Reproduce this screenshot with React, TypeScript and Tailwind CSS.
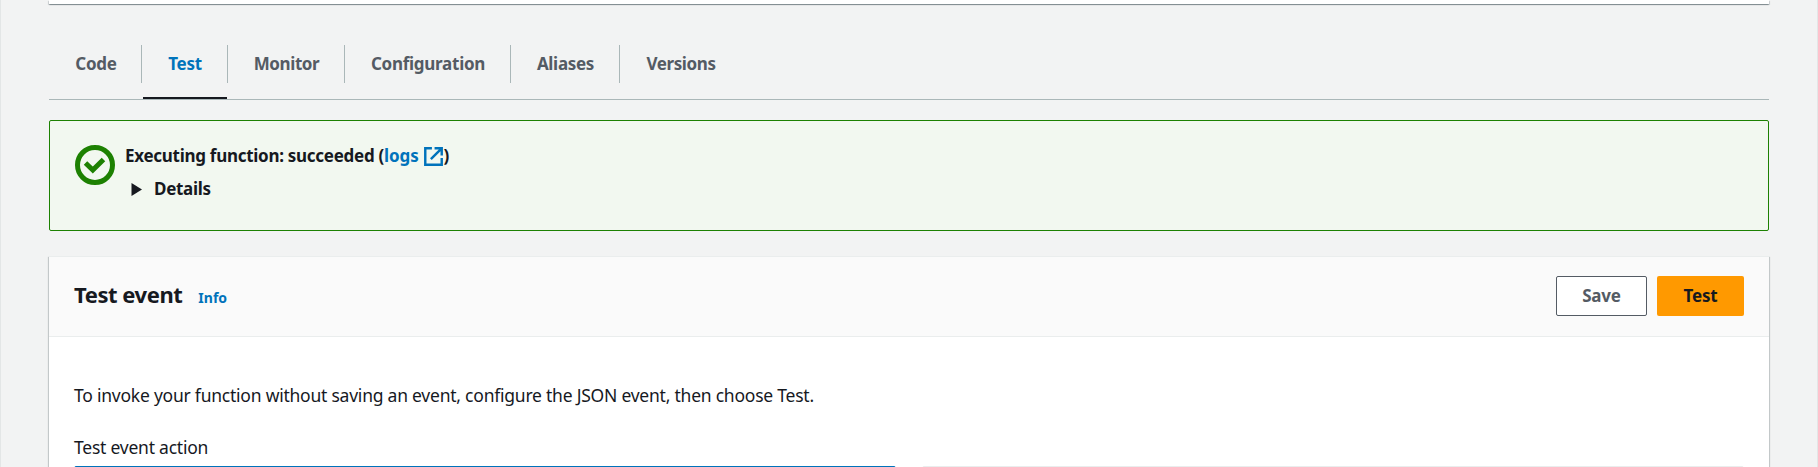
import React from "react";

const tabs = [
  { label: "Code", box: "w-[93px]", text: "ml-[2px] tracking-[-0.2px]" },
  { label: "Test", box: "w-[86px]", text: "ml-px tracking-[-0.3px]" },
  { label: "Monitor", box: "w-[117px]", text: "ml-px tracking-[-0.4px]" },
  { label: "Configuration", box: "w-[166px]", text: "ml-px tracking-[-0.26px]" },
  { label: "Aliases", box: "w-[109px]", text: "ml-px tracking-[-0.3px]" },
  { label: "Versions", box: "w-[122px]", text: "tracking-[-0.38px]" },
];

function Tabs() {
  return (
    <nav className="mt-[41px] flex h-[55px] border-b border-[#aab7b8]">
      {tabs.map((t, i) => {
        const active = t.label === "Test";
        return (
          <div key={t.label} className={`${t.box} flex flex-col justify-between`}>
            <div
              className={`flex h-[38px] items-center justify-center border-[#aab7b8] ${
                i < tabs.length - 1 ? "border-r" : ""
              }`}
            >
              <span
                className={`${t.text} text-[17px] leading-[22px] font-bold whitespace-nowrap ${
                  active ? "text-[#0073bb]" : "text-[#545b64]"
                }`}
              >
                {t.label}
              </span>
            </div>
            {active && <div className="mr-px ml-px h-[2px] bg-[#16191f]" />}
          </div>
        );
      })}
    </nav>
  );
}

function Alert() {
  return (
    <section className="mt-5 flex h-[111px] rounded-[2px] border border-[#1d8102] bg-[#f2f8f0] pt-[24px] pl-[25px] text-[17px] font-bold text-[#16191f]">
      <svg className="size-10 shrink-0" viewBox="0 0 40 40" fill="none" stroke="#1d8102">
        <circle cx="20" cy="20" r="17.5" strokeWidth="5" />
        <path d="M10.5 18 L17.8 25 L28.5 14.5" strokeWidth="5" />
      </svg>
      <div className="ml-[10px]">
        <div className="flex h-[22px] items-center whitespace-nowrap">
          <span className="tracking-[-0.28px]">Executing function: succeeded (</span>
          <a className="tracking-[-0.1px] text-[#0073bb]">logs</a>
          <svg className="ml-[5px] size-[19px]" viewBox="0 0 18 18" fill="none" stroke="#0073bb" strokeWidth="2.3">
            <path d="M7.5 1.2H1.2V16.8H16.8V10.5" />
            <path d="M10 1.2H16.8V8M16.5 1.5L6.5 11.5" />
          </svg>
          <span className="ml-px">)</span>
        </div>
        <div className="mt-[11px] flex h-[22px] items-center">
          <svg className="ml-[6px] h-[13px] w-[11px]" viewBox="0 0 11 13">
            <path d="M0.5 0L11 6.5L0.5 13Z" fill="#16191f" />
          </svg>
          <span className="ml-[12px] tracking-[-0.3px]">Details</span>
        </div>
      </div>
    </section>
  );
}

function TestEvent() {
  return (
    <section className="mt-[25px] h-[300px] border-t border-[#eaeded] bg-white text-[#16191f] shadow-[0_1px_1px_0_rgba(0,28,36,0.3),1px_1px_1px_0_rgba(0,28,36,0.15),-1px_1px_1px_0_rgba(0,28,36,0.15)]">
      <header className="flex h-[80px] items-center justify-between border-b border-[#eaeded] bg-[#fafafa] pr-[25px] pb-px pl-[25px]">
        <div className="flex items-baseline pb-[5px]">
          <h2 className="text-[22px] leading-[28px] font-bold tracking-[-0.45px]">Test event</h2>
          <a className="ml-4 text-[14px] font-bold text-[#0073bb]">Info</a>
        </div>
        <div className="flex gap-[10px] text-[17px] font-bold">
          <button className="h-10 w-[91px] rounded-[2px] border border-[#545b64] bg-white tracking-[-0.2px] text-[#545b64]">
            Save
          </button>
          <button className="h-10 w-[87px] rounded-[2px] bg-[#ff9900] tracking-[-0.2px] text-[#16191f]">Test</button>
        </div>
      </header>
      <div className="pt-[47px] pr-[25px] pl-[25px] text-[17.5px] leading-[22px] tracking-[-0.23px]">
        <p>To invoke your function without saving an event, configure the JSON event, then choose Test.</p>
        <div className="mt-[30px]">Test event action</div>
        <div className="mt-[8px] grid grid-cols-2 gap-[26px]">
          <div className="h-[60px] rounded-[2px] border border-[#0073bb] bg-[#f1faff]" />
          <div className="h-[60px] rounded-[2px] border border-[#eaeded]" />
        </div>
      </div>
    </section>
  );
}

export default function App() {
  return (
    <div className="h-[467px] overflow-hidden border-x border-[#e3e6e6] bg-[#f2f3f3] pr-[48px] pl-[48px] font-['Noto_Sans',sans-serif]">
      <div className="h-[4px] bg-white shadow-[0_1px_1px_0_rgba(0,28,36,0.3),1px_1px_1px_0_rgba(0,28,36,0.15),-1px_1px_1px_0_rgba(0,28,36,0.15)]" />
      <Tabs />
      <Alert />
      <TestEvent />
    </div>
  );
}
